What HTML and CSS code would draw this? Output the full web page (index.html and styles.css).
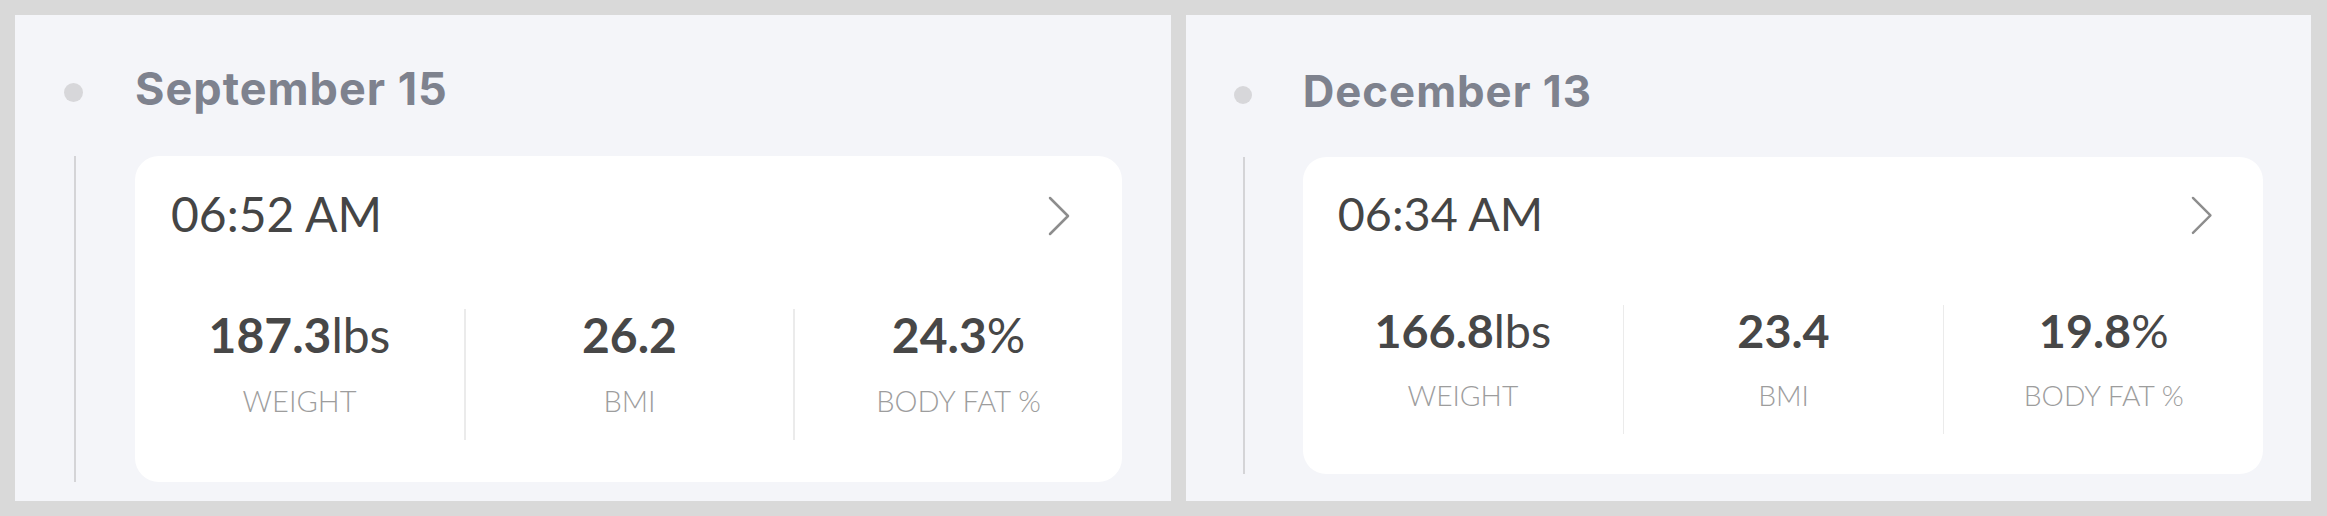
FILE: index.html
```html
<!DOCTYPE html>
<html lang="en">
<head>
    <meta charset="UTF-8">
    <meta name="viewport" content="width=device-width, initial-scale=1.0">
    <title>Weigh-in History</title>
    <link rel="stylesheet" href="styles.css">
</head>
<body>
    <main class="board">
        <section class="panel panel-wide">
            <div class="entry">
                <span class="dot"></span>
                <h2 class="entry-date">September 15</h2>
                <span class="rail"></span>
                <article class="card">
                    <div class="card-head">
                        <span class="card-time">06:52 AM</span>
                        <svg class="chevron" width="22" height="40" viewBox="0 0 22 40">
                            <polyline points="2,2 20,20 2,38" />
                        </svg>
                    </div>
                    <div class="stats">
                        <div class="stat">
                            <p class="stat-value">187.3<span class="unit">lbs</span></p>
                            <p class="stat-label">WEIGHT</p>
                        </div>
                        <div class="stat">
                            <p class="stat-value">26.2</p>
                            <p class="stat-label">BMI</p>
                        </div>
                        <div class="stat">
                            <p class="stat-value">24.3<span class="unit">%</span></p>
                            <p class="stat-label">BODY FAT %</p>
                        </div>
                    </div>
                </article>
            </div>
        </section>

        <section class="panel panel-narrow">
            <div class="entry">
                <span class="dot"></span>
                <h2 class="entry-date">December 13</h2>
                <span class="rail"></span>
                <article class="card">
                    <div class="card-head">
                        <span class="card-time">06:34 AM</span>
                        <svg class="chevron" width="22" height="40" viewBox="0 0 22 40">
                            <polyline points="2,2 20,20 2,38" />
                        </svg>
                    </div>
                    <div class="stats">
                        <div class="stat">
                            <p class="stat-value">166.8<span class="unit">lbs</span></p>
                            <p class="stat-label">WEIGHT</p>
                        </div>
                        <div class="stat">
                            <p class="stat-value">23.4</p>
                            <p class="stat-label">BMI</p>
                        </div>
                        <div class="stat">
                            <p class="stat-value">19.8<span class="unit">%</span></p>
                            <p class="stat-label">BODY FAT %</p>
                        </div>
                    </div>
                </article>
            </div>
        </section>
    </main>
</body>
</html>
```

FILE: styles.css
```css
body {
    margin: 0;
    background-color: #d9d9d9;
    font-family: Lato, "Liberation Sans", sans-serif;
}

.board {
    display: flex;
    gap: 15px;
    height: 516px;
    padding: 15px 16px 15px 15px;
    box-sizing: border-box;
}

.panel {
    background-color: #f4f5f9;
    overflow: hidden;
}

.panel-wide {
    width: 1156px;
}

.panel-narrow {
    width: 1125px;
}

.entry {
    display: grid;
    grid-template-columns: 120px 1fr;
    row-gap: 40px;
    padding: 47px 49px 0 0;
}

/* second screenshot is slightly smaller */
.panel-narrow .entry {
    zoom: 0.973;
    padding-top: 52px;
}

.dot {
    width: 19px;
    height: 19px;
    margin: 6px 0 0 49px;
    border-radius: 50%;
    background-color: #d7d7da;
    align-self: center;
}

.entry-date {
    margin: 0;
    font-family: Inter, "Liberation Sans", sans-serif;
    font-size: 45px;
    line-height: 54px;
    font-weight: 700;
    letter-spacing: 1px;
    color: #7e828e;
}

.rail {
    width: 2px;
    margin-left: 59px;
    background-color: #d4d4d7;
}

.card {
    background-color: #fff;
    border-radius: 24px;
    padding: 29px 0 42px;
}

.card-head {
    display: flex;
    justify-content: space-between;
    align-items: center;
    padding: 0 52px 0 36px;
}

.card-time {
    font-size: 48px;
    line-height: 1.2;
    color: #454545;
}

.chevron {
    margin-top: 4px;
}

.chevron polyline {
    fill: none;
    stroke: #8d8d8d;
    stroke-width: 2.5;
    stroke-linecap: round;
    stroke-linejoin: round;
}

.stats {
    display: grid;
    grid-template-columns: repeat(3, 1fr);
    margin-top: 66px;
}

.stat {
    text-align: center;
    padding-bottom: 21px;
}

.stat + .stat {
    border-left: 2px solid #ebebeb;
}

.stat-value {
    margin: 0;
    font-size: 48px;
    line-height: 1.1;
    font-weight: 700;
    color: #474747;
}

.unit {
    font-weight: 400;
}

.stat-label {
    margin: 23px 0 0;
    font-size: 29px;
    line-height: 1.2;
    font-weight: 300;
    color: #9d9d9d;
}
```
